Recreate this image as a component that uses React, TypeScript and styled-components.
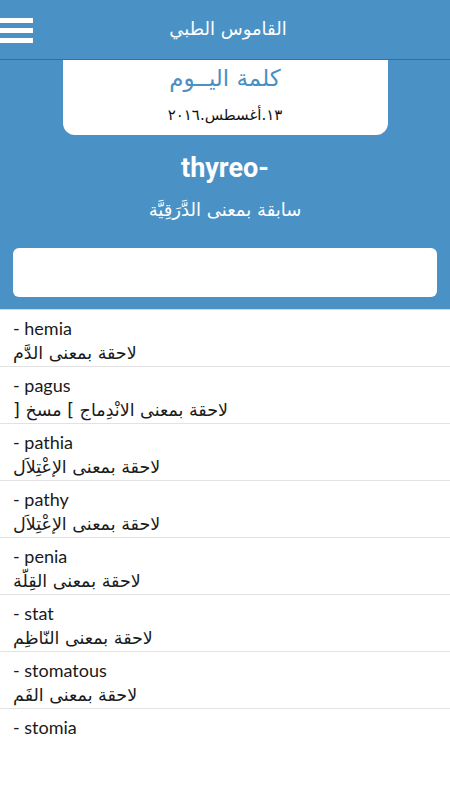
import React from 'react';
import styled, { createGlobalStyle } from 'styled-components';

const GlobalStyle = createGlobalStyle`
  html, body {
    margin: 0;
    padding: 0;
    background: #ffffff;
  }
  body {
    font-family: Lato, "DejaVu Sans", sans-serif;
  }
`;

const BLUE = '#4a92c6';

const Page = styled.div`
  width: 450px;
  min-height: 800px;
  background: #ffffff;
`;

const TopBar = styled.header`
  height: 59px;
  background: ${BLUE};
  border-bottom: 1px solid #3d6f96;
  display: flex;
  align-items: center;
  justify-content: center;
  position: relative;
`;

const Burger = styled.div`
  position: absolute;
  left: 0;
  top: 18px;
  width: 33px;
  display: flex;
  flex-direction: column;
  gap: 5px;

  span {
    display: block;
    height: 5px;
    background: #ffffff;
  }
`;

const AppTitle = styled.h1`
  margin: 0;
  direction: rtl;
  font-family: "DejaVu Sans", sans-serif;
  font-weight: normal;
  font-size: 18px;
  color: #ffffff;
  padding: 0 0 3px 6px;
`;

const Hero = styled.section`
  background: ${BLUE};
  padding: 0 13px 12px;
  border-bottom: 1px solid #c9dceb;
  display: flex;
  flex-direction: column;
  align-items: center;
`;

const WordCard = styled.div`
  width: 325px;
  height: 75px;
  background: #ffffff;
  border-radius: 0 0 12px 12px;
  display: flex;
  flex-direction: column;
  align-items: center;
  direction: rtl;
  font-family: "DejaVu Sans", sans-serif;
`;

const CardTitle = styled.div`
  color: #4a90c4;
  font-size: 23px;
  line-height: 30px;
  margin-top: 3px;
`;

const CardDate = styled.div`
  color: #111111;
  font-size: 15px;
  line-height: 20px;
  margin-top: 12px;
`;

const Term = styled.div`
  margin-top: 16px;
  font-family: Roboto, sans-serif;
  font-weight: bold;
  font-size: 27px;
  line-height: 34px;
  color: #ffffff;
`;

const Meaning = styled.div`
  margin-top: 10px;
  direction: rtl;
  font-family: "DejaVu Sans", sans-serif;
  font-size: 18px;
  line-height: 30px;
  color: #ffffff;
`;

const SearchBox = styled.input`
  box-sizing: border-box;
  margin-top: 23px;
  width: 424px;
  height: 49px;
  border: none;
  border-radius: 6px;
  background: #ffffff;
  outline: none;
  font-size: 17px;
  padding: 0 12px;
`;

const List = styled.ul`
  list-style: none;
  margin: 0;
  padding: 0;
`;

const Row = styled.li<{ $last?: boolean }>`
  box-sizing: border-box;
  height: 57px;
  border-bottom: 1px solid ${(p) => (p.$last ? 'transparent' : '#e2e2e2')};
  padding: 6px 13px 0;
  display: flex;
  flex-direction: column;
`;

const English = styled.div`
  font-family: Lato, sans-serif;
  font-size: 18px;
  line-height: 24px;
  color: #1a1a1a;
`;

const Gloss = styled.div`
  direction: rtl;
  text-align: left;
  font-family: "DejaVu Sans", sans-serif;
  font-size: 17.5px;
  line-height: 27px;
  color: #1a1a1a;
`;

const entries = [
  { en: '- hemia', ar: 'لاحقة بمعنى الدَّم' },
  { en: '- pagus', ar: 'لاحقة بمعنى الانْدِماج ] مسخ [' },
  { en: '- pathia', ar: 'لاحقة بمعنى الإعْتِلاَل' },
  { en: '- pathy', ar: 'لاحقة بمعنى الإعْتِلاَل' },
  { en: '- penia', ar: 'لاحقة بمعنى القِلّة' },
  { en: '- stat', ar: 'لاحقة بمعنى النّاظِم' },
  { en: '- stomatous', ar: 'لاحقة بمعنى الفَم' },
  { en: '- stomia', ar: '' },
];

const App = () => {
  return (
    <>
      <GlobalStyle />
      <Page>
        <TopBar>
          <Burger>
            <span />
            <span />
            <span />
          </Burger>
          <AppTitle>القاموس الطبي</AppTitle>
        </TopBar>

        <Hero>
          <WordCard>
            <CardTitle>كلمة اليــوم</CardTitle>
            <CardDate>١٣.أغسطس.٢٠١٦</CardDate>
          </WordCard>
          <Term>thyreo-</Term>
          <Meaning>سابقة بمعنى الدَّرَقِيَّة</Meaning>
          <SearchBox type="text" />
        </Hero>

        <List>
          {entries.map((e, i) => (
            <Row key={e.en} $last={i === entries.length - 1}>
              <English>{e.en}</English>
              <Gloss>{e.ar}</Gloss>
            </Row>
          ))}
        </List>
      </Page>
    </>
  );
};

export default App;
